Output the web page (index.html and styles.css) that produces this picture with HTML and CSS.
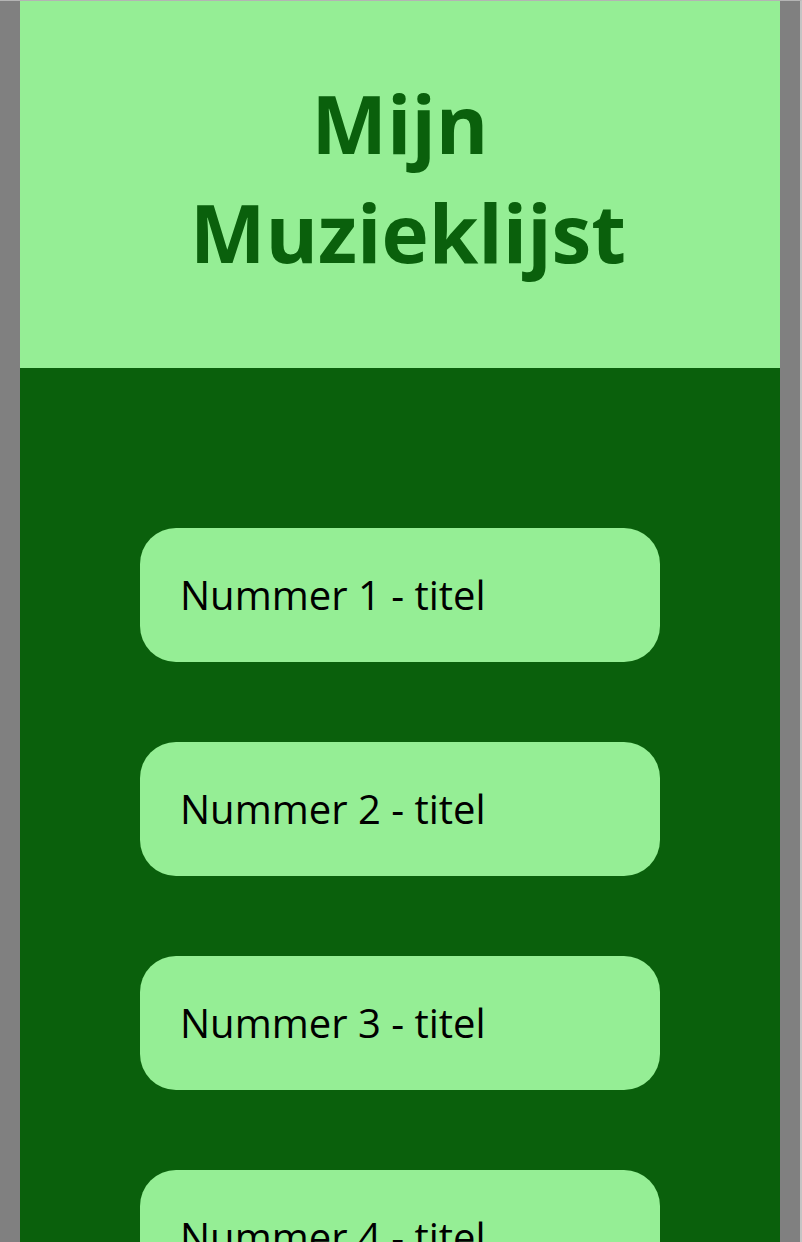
FILE: index.html
```html
<!DOCTYPE html>
<html lang="nl">
<head>
<meta charset="utf-8">
<title>Mijn Muzieklijst</title>
<link rel="stylesheet" href="styles.css">
</head>
<body>
<div class="frame">
  <main class="page">
    <header class="header">
      <h1 class="title">Mijn Muzieklijst</h1>
    </header>
    <section class="list">
      <div class="track">Nummer 1 - titel</div>
      <div class="track">Nummer 2 - titel</div>
      <div class="track">Nummer 3 - titel</div>
      <div class="track">Nummer 4 - titel</div>
    </section>
  </main>
</div>
</body>
</html>
```

FILE: styles.css
```css
html, body {
  margin: 0;
  padding: 0;
  height: 100%;
  overflow: hidden;
}
body {
  background: #808080;
  font-family: "Open Sans", "Liberation Sans", sans-serif;
}
.frame {
  border-top: 1px solid #b4b4b4;
  border-right: 2px solid #c4c4c4;
  width: 760px;
  padding: 0 20px;
  min-height: 1241px;
}
.page {
  background: #0a600c;
  min-height: 1241px;
}
.header {
  background: #95ee95;
  padding: 67px 40px 82px;
  text-align: center;
}
.title {
  margin: 0;
  font-size: 80px;
  font-weight: 700;
  line-height: 109px;
  color: #0a600c;
  padding: 0 130px;
}
.list {
  display: flex;
  flex-direction: column;
  gap: 80px;
  padding: 160px 120px 80px;
}
.track {
  background: #95ee95;
  border-radius: 36px;
  padding: 40px;
  font-size: 40px;
  line-height: 54px;
  color: #000;
}
```
